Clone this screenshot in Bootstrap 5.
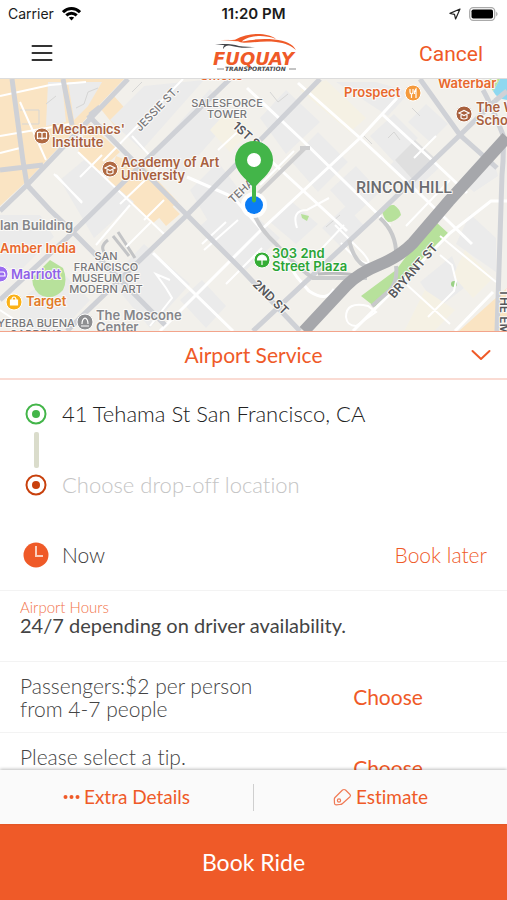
<!DOCTYPE html>
<html lang="en">
<head>
<meta charset="utf-8">
<meta name="viewport" content="width=device-width, initial-scale=1">
<title>Book a ride</title>
<link href="https://cdn.jsdelivr.net/npm/bootstrap@5.3.0/dist/css/bootstrap.min.css" rel="stylesheet">
<style>
  :root { --brand: #ef5a28; }
  body { font-family: Lato, "Open Sans", sans-serif; color: #3c3c3c; font-size: 21px; line-height: 24px; background: #fff; }
  body, button, input { font-variant-ligatures: none; }
  button { font-family: inherit; }
  .sys-font { font-family: Inter, "Liberation Sans", sans-serif; }
  .status-strip { height: 28px; font-size: 14px; line-height: 28px; color: #1b1b1b; padding: 0 8px; }
  .status-time { font-size: 15px; }
  .thirds > * { flex: 1 1 0; }
  .thirds > .fixed-part { flex: 0 0 auto; }
  .top-nav { height: 51px; padding: 0 24px 0 30px; border-bottom: 1px solid #dcdcdc; }
  .plain-btn { border: 0; background: none; padding: 0; color: var(--brand); }
  .cancel-btn { font-family: Roboto, sans-serif; font-size: 21px; font-weight: 400; }
  .city-map { height: 252px; width: 100%; }
  .service-btn { height: 49px; border-top: 1px solid #f3a48b; border-bottom: 2px solid #fadbd3; padding: 0 16px; }
  .trip-panel { padding: 14px 20px 15px 24px; }
  .trip-row { height: 40px; gap: 14px; }
  .trip-row input { border: 0; padding: 0; outline: 0; min-width: 0; background: none; font-size: 22px; font-weight: 300; color: #222; }
  .trip-row input::placeholder { color: #c4c4c4; opacity: 1; }
  .trip-link { height: 31px; width: 24px; }
  .trip-link span { width: 5px; height: 36px; margin: -2px auto 0; border-radius: 2px; background: #dadccb; }
  .detail-list { min-height: 0; overflow-y: auto; scrollbar-width: none; }
  .detail-list::-webkit-scrollbar { display: none; }
  .detail-row { min-height: 71px; flex-shrink: 0; border-bottom: 1px solid #f3f3f3; padding: 0 20px; }
  .when-row { padding-left: 23px; gap: 13px; }
  .light-text { font-weight: 300; }
  .caption-text { font-size: 15px; line-height: 14px; color: #f2744b; font-weight: 300; }
  .hours-text { font-size: 20px; line-height: 22px; color: #444; }
  .option-text { line-height: 23px; color: #444; width: 250px; font-weight: 300; }
  .option-pick { width: 198px; }
  .extras-bar { height: 54px; background: #fafafa; box-shadow: 0 -1px 3px rgba(0, 0, 0, .25); z-index: 1; font-size: 19px; }
  .extras-rule { width: 1px; height: 27px; background: #cfcfcf; }
  .book-btn { height: 76px; border-radius: 0; background: var(--brand); border: 0; color: #fff; font-size: 23px; }
  .book-btn:hover { background: #d94d1f; color: #fff; }
  .m-label { font-family: Inter, "Liberation Sans", sans-serif; font-weight: 600; font-size: 13px; paint-order: stroke; stroke: #fbfaf8; stroke-width: 2px; stroke-linejoin: round; }
  .m-area { font-size: 11px; fill: #77777a; font-weight: 500; }
  .m-road { font-size: 12px; font-weight: 600; fill: #55565a; }
  .m-lane { font-size: 11px; font-weight: 500; fill: #77777a; }
  .m-district { font-family: Roboto, sans-serif; font-size: 16px; font-weight: 500; fill: #6b6c70; }
</style>
</head>
<body>
<div class="vh-100 d-flex flex-column overflow-hidden">

  <div class="status-strip sys-font thirds d-flex flex-shrink-0">
    <div class="d-flex align-items-center gap-2"><span>Carrier</span>
      <svg width="19" height="14" viewBox="0 0 19 14" fill="none" stroke="#000" stroke-width="3" aria-hidden="true"><path d="M1 5.2C6 .4 13 .4 18 5.2"/><path d="M4.3 8.4c3-2.8 7.400-2.800 10.400 0"/><path d="M6.800 10.600c1.600-1.300 3.800-1.300 5.400 0L9.500 13.500z" fill="#000" stroke="none"/></svg>
    </div>
    <div class="status-time text-center fw-semibold">11:20 PM</div>
    <div class="d-flex align-items-center justify-content-end gap-2">
      <svg width="12" height="12" viewBox="0 0 12 12" fill="none" stroke="#222" stroke-width="1.200" stroke-linejoin="round" aria-hidden="true"><path d="M11 1 1 5.400l4.500 1L6.600 11z"/></svg>
      <svg width="30" height="14" viewBox="0 0 30 14" aria-hidden="true"><rect x=".7" y=".7" width="25" height="12.600" rx="3.500" fill="#fff" stroke="#aaa" stroke-width="1.300"/><rect x="2.500" y="2.500" width="21.500" height="9" rx="1.800"/><path d="M27.300 4.500q2.400 2.500 0 5z" fill="#999"/></svg>
    </div>
  </div>

  <header class="top-nav thirds d-flex align-items-center flex-shrink-0">
    <div class="d-flex"><button class="plain-btn d-flex" aria-label="Menu">
      <svg width="24" height="18" viewBox="0 0 24 18" stroke="#333" stroke-width="2" stroke-linecap="round"><path d="M2.500 2h19M2.500 9h19M2.500 16h19"/></svg>
    </button></div>
    <svg class="fixed-part" width="90" height="40" viewBox="209 33 90 40" role="img" aria-label="Fuquay Transportation">
      <path d="M215 39.500q10 .8 17 .2C240 35 250 33.500 257 34c8 .5 13 2.500 16 5-7-2.800-14-3.300-20-2.800-7 .6-12 2.800-14 5.200 12-2 20-3.200 32-2 12 1.300 19 4.600 22 10.600-5-4.500-11-7-20-8-13-1.500-23 .8-32 .8q-4-.2-6-1.600l-18-.7 16-.2z" fill="#ef5a28"/>
      <path d="M212 44h13c6 .2 9 1.800 15 2.600q6 .6 12 .4c-10 1.600-17 .5-22-.8-6-1.400-8-.2-10 3 0-2 .3-3 1.500-4z" fill="#45474c"/>
      <text x="210" y="65" font-family="DejaVu Sans" font-weight="700" font-style="italic" font-size="18" fill="#ef5a28">FUQUAY</text>
      <text x="222" y="71" font-family="DejaVu Sans" font-weight="700" font-style="italic" font-size="6" fill="#45474c">TRANSPORTATION</text>
      <path d="M214 69h7M286 69h7" stroke="#888"/>
    </svg>
    <div class="text-end"><button class="plain-btn cancel-btn">Cancel</button></div>
  </header>

  <svg class="city-map d-block flex-shrink-0" viewBox="0 79 507 252" preserveAspectRatio="xMidYMid slice" role="img" aria-label="Map of the pickup area">
    <rect y="79" width="507" height="252" fill="#f2f0eb"/>
    <path d="M0 79h124L80 125 28 180 0 206zM88 122l32 30-22 20-20-20zM100 108l14-12 16 18-14 14zM116 156l30 12 32 34-26 22-26-26-22-6zM507 288l-48 43h48zM168 202l12 12-14 12-10-12z" fill="#fae4c3"/>
    <path d="M48 82h14l4 40-20 4zM68 82h34l-14 24-14 14zM110 120l34-34 60-6-62 70zM150 155l60-66 24 26-56 64zM60 180l24-20 50 42-40 36zM190 190l28-28 26 34-32 32zM200 226l34-30 46 42-34 32zM260 118l26-28 34 32-34 32zM290 160l28-28 30 30-30 30zM336 82h40l34 10-22 24zM370 136l24-22 24 24-24 24zM390 165l24-22 26 24-26 24zM330 190l26-24 24 26-26 24zM426 104l22 20-18 18-22-20zM460 180l30-34 8 30-24 16zM110 280l34-36 46 40-40 44zM0 215h40l14 22-34 34-20-6zM20 300l40-30 30 30-28 30H20zM180 300l22-20 24 26-20 22zM470 214l26 24v34l-40-28zM420 282l32-26 12 32-26 20zM270 222l22-20 26 22-22 20zM322 228l24-22 20 22-24 20z" fill="#ebebeb"/>
    <path d="M395 160l20-20 22 20-22 22z" fill="#dfdfdf"/>
    <path d="M300 90l26-10 40 38-16 14zM210 130l20-22 22 22-22 22zM425 290l30 20-20 20h-30zM465 250l28 28-20 20-20-22z" fill="#f5f1e4"/>
    <path d="M20 110h19v14H22M46 104l10-8M76 108l8-4 4-12 10-4M132 92l10-10M80 222l14-12M340 215l-14 12M270 92l8 10 10-8M364 136l8 8M388 138l6-6 6 8M412 108l8 8" fill="none" stroke="#d6d6d5"/>
    <path d="M361 296l14 11 20-19 53-55-12-11-22 24-18 24zM382 212q4-8 12-7 6 4 7 10-6 8-15 7zM32 278l18-18 13 8q5 12 0 22-7 8-16 7-10-1-14-12z" fill="#b7e19b"/>
    <circle cx="454" cy="284" r="3" fill="#9ad184"/><path d="M301 214l8 2-2 5-5-3z" fill="#b7e19b"/>
    <path d="M507 79h-7l-7 12q4 8 14 9z" fill="#8ed8f0"/><path d="M486 79l7 12 7-12z" fill="#b7e19b"/>
    <path d="M108 240q-8 6-4 12M118 232l17 26M113 236l16 20" fill="none" stroke="#c3c4c6" stroke-width="3"/>
    <!-- minor streets -->
    <g fill="none" stroke="#fff">
      <path d="M0 96l50-11 36-3M0 136l70-12M0 153l20-5M20 102l26 58M183 79l-80 82M56 175l26 28M130 205l-34 40M78 152l86 82M102 155l-22 22M132 136l20 22M54 174l28 28M120 204l40-38M144 220l20-20M126 247l26-26M260 185l34-34M218 150l26-24M204 250l34-30M170 280l-14-6 10 14 6 10-22 28M262 248l-36 36M226 222l-24 22M450 180l-44 46M297 228q-6-18 10-18l22-12M335 225l28 28q10 12 2 10t-24-20M344 225l-34 36M440 236l56 46M440 255l12 10 4 16-2 10-26 26M406 284l44 40M346 317q0-16 22-11l8 6-20 14q-9 0-10-9zM0 310l30 20M436 136l-22 22" stroke-width="2"/>
      <path d="M247 88l53 50 90 88M257 148l90 83M298 83l62 55 62 58 50 48M397 98l-37 40-100 93-100 100M383 115l50 46 34 32M507 201h-16l-41 32-97 98M153 253l80 78M187 177l46 20 28 32M277 247l20 30 12 14q18 12 25-2M493 292l-38 39" stroke-width="3"/>
    </g>
    <!-- main streets -->
    <g fill="none" stroke="#cfd1d6" stroke-width="5">
      <path d="M128 79L27 185 0 211M12 79l11 82 4 24 23 25 23 22 92 93M63 79l9 46M0 170l43-5M88 115l99 100 53 53 60 63M90 115l10-8M230 79l-87 84-76 75L0 300M320 79L187 215 80 318 67 331M495 101l-35 34-83 80-124 116M420 79l40 56 37 33M483 90q8 14 20 45 1 20-1 40l-5 156M507 91l-12 10"/>
      <path d="M380 218q18 16 16 42M396 266q2 14-6 24l-18 16" stroke="#c8c9cb" stroke-width="4"/>
      <path d="M253 211q6 18 24 34 22 24 36 33l54 0M349 240q6 26 22 28" stroke="#cacbcd" stroke-width="4"/>
      <path d="M305 148l-48 47M300 148h10" stroke="#cfcfd0" stroke-width="4"/>
    </g>
    <path d="M318 274q24-2 42 2l24-10" fill="none" stroke="#bcbdbf" stroke-width="3"/>
    <path d="M507 137l-58 64-36 42q-14 14-34 22-20 8-32 20l-43 46" fill="none" stroke="#a6a7ab" stroke-width="12"/>
    <!-- place names -->
    <g class="m-label">
      <g fill="#a8603d"><text x="52" y="134">Mechanics'</text><text x="52" y="147">Institute</text><text x="121" y="167">Academy of Art</text><text x="121" y="180">University</text><text x="476" y="112">The W</text><text x="476" y="125">School</text></g>
      <g fill="#e8682c"><text x="344" y="97">Prospect</text><text x="438" y="88">Waterbar</text><text x="200" y="80">Smoke</text><text x="0" y="253">Amber India</text><text x="26" y="306" fill="#e17a28">Target</text></g>
      <g fill="#2aa536"><text x="272" y="258">303 2nd</text><text x="272" y="271">Street Plaza</text></g>
      <text x="11" y="279" fill="#8f63e8">Marriott</text>
      <g fill="#85868a"><text x="0" y="230">lan Building</text><text x="96" y="320">The Moscone</text><text x="96" y="332">Center</text></g>
      <g class="m-area" text-anchor="middle"><text x="227" y="107">SALESFORCE</text><text x="227" y="118">TOWER</text><text x="106" y="260">SAN</text><text x="106" y="271">FRANCISCO</text><text x="106" y="282">MUSEUM OF</text><text x="106" y="293">MODERN ART</text><text x="36" y="327">YERBA BUENA</text><text x="36" y="338">GARDENS</text></g>
      <text class="m-district" x="356" y="193">RINCON HILL</text>
      <g class="m-road">
        <text class="m-lane" transform="translate(140 132) rotate(-46)">JESSIE ST.</text>
        <text transform="translate(232 127) rotate(43)">1ST ST</text>
        <text class="m-lane" transform="translate(233 204) rotate(-43)">TEHAMA</text>
        <text transform="translate(252 285) rotate(44)">2ND ST</text>
        <text transform="translate(394 299) rotate(-49)">BRYANT ST</text>
        <text transform="translate(500 289) rotate(90)">THE EMBARCADERO</text>
      </g>
    </g>
    <!-- place markers -->
    <g stroke="#fff" stroke-width="1">
      <circle cx="42" cy="136" r="8" fill="#b06a42"/><circle cx="110" cy="169" r="8" fill="#b06a42"/><circle cx="464" cy="114" r="8" fill="#a8603d"/>
      <circle cx="413" cy="93" r="8" fill="#f59a3c"/><circle cx="262" cy="260" r="8" fill="#35ad35"/><circle cx="0" cy="274" r="8" fill="#9b6cf0"/>
      <circle cx="14" cy="302" r="8" fill="#fbb116"/><circle cx="85" cy="322" r="8" fill="#8e8f92"/>
    </g>
    <g fill="none" stroke="#fff" stroke-width="1.200">
      <path d="M42 133v6M37.500 132.500q3-1 4.500.5 1.500-1.500 4.500-.5v6q-3-1-4.500.5-1.500-1.500-4.500-.5z"/>
      <path d="M105 168l5-2.500 5 2.500-5 2.500zM107 170v3q3 2 6 0v-3M459 113l5-2.500 5 2.500-5 2.500zM461 115v3q3 2 6 0v-3"/>
      <path d="M410 89v3q0 2 1.500 2v4M413 89v3q0 2-1.500 2M416 98v-9q-2 2-1.500 5"/>
      <path d="M0 272h3q2 0 2 4H0M81 326h8M82 324q0-5 3-6 3 1 3 6M12 300q0-3 2-3t2 3"/>
      <path d="M10.500 300h7v5h-7z" fill="#fff"/><path d="M257.500 260q0-4 4.500-5 4.500 1 4.500 5zM262 260v5" fill="#fff"/>
    </g>
    <!-- pickup pin -->
    <circle cx="254" cy="205" r="13" fill="#fff" opacity=".9"/><circle cx="254" cy="205" r="9" fill="#0a7cf5"/>
    <path d="M254 141a19 19 0 0 1 19 19c0 11-10 18-17 26v15q-2 3-4 0v-15c-7-8-17-15-17-26a19 19 0 0 1 19-19z" fill="#43b549"/><circle cx="254" cy="160" r="7" fill="#fff"/>
  </svg>

  <button class="plain-btn service-btn thirds w-100 d-flex align-items-center flex-shrink-0">
    <span></span><span>Airport Service</span>
    <span class="d-flex justify-content-end"><svg width="20" height="12" viewBox="0 0 20 12" fill="none" stroke="#ef5a28" stroke-width="2" stroke-linecap="round" stroke-linejoin="round" aria-hidden="true"><path d="M1.500 2l8.500 8 8.500-8"/></svg></span>
  </button>

  <section class="trip-panel flex-shrink-0">
    <div class="trip-row d-flex align-items-center">
      <svg width="24" height="24" viewBox="0 0 24 24" aria-hidden="true"><circle cx="12" cy="12" r="9.500" fill="none" stroke="#43b549" stroke-width="2"/><circle cx="12" cy="12" r="4" fill="#43b549"/></svg>
      <input class="flex-fill" type="text" aria-label="Pickup location" value="41 Tehama St San Francisco, CA">
    </div>
    <div class="trip-link d-flex"><span></span></div>
    <div class="trip-row d-flex align-items-center">
      <svg width="24" height="24" viewBox="0 0 24 24" aria-hidden="true"><circle cx="12" cy="12" r="9.500" fill="none" stroke="#c8400c" stroke-width="2"/><circle cx="12" cy="12" r="4" fill="#c8400c"/></svg>
      <input class="flex-fill" type="text" aria-label="Drop-off location" placeholder="Choose drop-off location">
    </div>
  </section>

  <main class="detail-list flex-fill d-flex flex-column">
    <div class="detail-row when-row d-flex align-items-center light-text">
      <svg width="26" height="26" viewBox="0 0 26 26" aria-hidden="true"><circle cx="13" cy="13" r="12.500" fill="#ef5a28"/><path d="M13 4v10h7" fill="none" stroke="#fbd0bf" stroke-width="2"/></svg>
      <span class="flex-fill">Now</span>
      <button class="plain-btn light-text">Book later</button>
    </div>
    <div class="detail-row d-flex flex-column justify-content-center pb-3">
      <div class="caption-text">Airport Hours</div>
      <div class="hours-text">24/7 depending on driver availability.</div>
    </div>
    <div class="detail-row d-flex align-items-center justify-content-between">
      <div class="option-text">Passengers:$2 per person from 4-7 people</div>
      <div class="option-pick text-center"><button class="plain-btn">Choose</button></div>
    </div>
    <div class="detail-row d-flex align-items-center justify-content-between">
      <div class="option-text pb-4">Please select a tip.</div>
      <div class="option-pick text-center"><button class="plain-btn">Choose</button></div>
    </div>
  </main>

  <div class="extras-bar thirds d-flex align-items-center flex-shrink-0 position-relative">
    <button class="plain-btn d-flex align-items-center justify-content-center gap-1">
      <svg width="17" height="6" viewBox="0 0 17 6" fill="#ef5a28" aria-hidden="true"><circle cx="2.500" cy="3" r="2"/><circle cx="8.500" cy="3" r="2"/><circle cx="14.500" cy="3" r="2"/></svg>
      <span>Extra Details</span>
    </button>
    <div class="extras-rule fixed-part"></div>
    <button class="plain-btn d-flex align-items-center justify-content-center gap-1">
      <svg width="19" height="18" viewBox="0 0 19 18" fill="none" stroke="#f07a55" stroke-width="1.200" stroke-linejoin="round" aria-hidden="true"><path d="M2 9.500L9.500 2q1.500-1 3 0l4.500 4.500q1 1 0 2.200L9.500 15.500q-1 1-2.500 1l-4 .3q-1.500 0-1.500-1.500l-.2-4q0-1 .7-1.800z"/><circle cx="6" cy="12.500" r="1.600"/></svg>
      <span>Estimate</span>
    </button>
  </div>
  <button class="btn book-btn w-100 flex-shrink-0">Book Ride</button>
</div>
<script src="https://cdn.jsdelivr.net/npm/bootstrap@5.3.0/dist/js/bootstrap.bundle.min.js"></script>
</body>
</html>
